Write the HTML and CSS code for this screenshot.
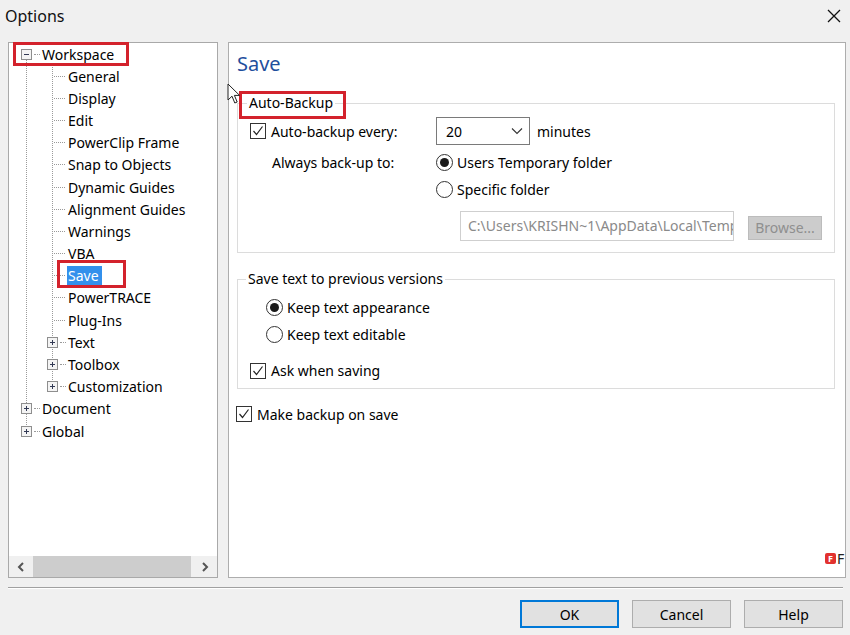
FILE: index.html
```html
<!DOCTYPE html>
<html>
<head>
<meta charset="utf-8">
<link rel="stylesheet" href="styles.css">
</head>
<body>
<div class="window">
  <div class="titlebar">
    <span class="title">Options</span>
    <svg class="close" width="14" height="14" viewBox="0 0 14 14"><path d="M1 1 L13 13 M13 1 L1 13" stroke="#111" stroke-width="1.3" fill="none"/></svg>
  </div>
  <div class="main">
    <div class="tree-panel">
      <div class="tree">
        <div class="row top"><svg class="exp" width="11" height="11" viewBox="0 0 11 11"><rect x="0.5" y="0.5" width="10" height="10" fill="#f4f4f4" stroke="#8e8e8e"/><path d="M3 5.5 H8" stroke="#333a55" stroke-width="1"/></svg><span class="hdots"></span><span class="label">Workspace</span></div>
        <div class="row child"><span class="cdots"></span><span class="label">General</span></div>
        <div class="row child"><span class="cdots"></span><span class="label">Display</span></div>
        <div class="row child"><span class="cdots"></span><span class="label">Edit</span></div>
        <div class="row child"><span class="cdots"></span><span class="label">PowerClip Frame</span></div>
        <div class="row child"><span class="cdots"></span><span class="label">Snap to Objects</span></div>
        <div class="row child"><span class="cdots"></span><span class="label">Dynamic Guides</span></div>
        <div class="row child"><span class="cdots"></span><span class="label">Alignment Guides</span></div>
        <div class="row child"><span class="cdots"></span><span class="label">Warnings</span></div>
        <div class="row child"><span class="cdots"></span><span class="label">VBA</span></div>
        <div class="row child"><span class="cdots"></span><span class="label sel">Save</span></div>
        <div class="row child"><span class="cdots"></span><span class="label">PowerTRACE</span></div>
        <div class="row child"><span class="cdots"></span><span class="label">Plug-Ins</span></div>
        <div class="row childexp"><svg class="exp" width="11" height="11" viewBox="0 0 11 11"><rect x="0.5" y="0.5" width="10" height="10" fill="#f4f4f4" stroke="#8e8e8e"/><path d="M3 5.5 H8 M5.5 3 V8" stroke="#333a55" stroke-width="1"/></svg><span class="hdots"></span><span class="label">Text</span></div>
        <div class="row childexp"><svg class="exp" width="11" height="11" viewBox="0 0 11 11"><rect x="0.5" y="0.5" width="10" height="10" fill="#f4f4f4" stroke="#8e8e8e"/><path d="M3 5.5 H8 M5.5 3 V8" stroke="#333a55" stroke-width="1"/></svg><span class="hdots"></span><span class="label">Toolbox</span></div>
        <div class="row childexp"><svg class="exp" width="11" height="11" viewBox="0 0 11 11"><rect x="0.5" y="0.5" width="10" height="10" fill="#f4f4f4" stroke="#8e8e8e"/><path d="M3 5.5 H8 M5.5 3 V8" stroke="#333a55" stroke-width="1"/></svg><span class="hdots"></span><span class="label">Customization</span></div>
        <div class="row top"><svg class="exp" width="11" height="11" viewBox="0 0 11 11"><rect x="0.5" y="0.5" width="10" height="10" fill="#f4f4f4" stroke="#8e8e8e"/><path d="M3 5.5 H8 M5.5 3 V8" stroke="#333a55" stroke-width="1"/></svg><span class="hdots"></span><span class="label">Document</span></div>
        <div class="row top"><svg class="exp" width="11" height="11" viewBox="0 0 11 11"><rect x="0.5" y="0.5" width="10" height="10" fill="#f4f4f4" stroke="#8e8e8e"/><path d="M3 5.5 H8 M5.5 3 V8" stroke="#333a55" stroke-width="1"/></svg><span class="hdots"></span><span class="label">Global</span></div>
      </div>
      <div class="hscroll">
        <div class="sbtn"><svg width="8" height="10" viewBox="0 0 8 10"><path d="M6 1 L2 5 L6 9" stroke="#555" stroke-width="2" fill="none"/></svg></div>
        <div class="thumb"></div>
        <div class="sfill"></div>
        <div class="sbtn"><svg width="8" height="10" viewBox="0 0 8 10"><path d="M2 1 L6 5 L2 9" stroke="#555" stroke-width="2" fill="none"/></svg></div>
      </div>
    </div>
    <div class="content-panel">
      <h1 class="page-title">Save</h1>
      <div class="group g1">
        <div class="group-title">Auto-Backup</div>
        <div class="grow r1">
          <label class="col1 opt"><span class="cb"><svg width="14" height="14" viewBox="0 0 14 14"><path d="M2.5 7 L5.5 10.5 L11.5 2.5" stroke="#222" stroke-width="1.2" fill="none"/></svg></span>Auto-backup every:</label>
          <div class="select"><span>20</span><svg width="12" height="8" viewBox="0 0 12 8"><path d="M1 1.5 L6 6.5 L11 1.5" stroke="#333" stroke-width="1.1" fill="none"/></svg></div>
          <span class="unit">minutes</span>
        </div>
        <div class="grow r2">
          <span class="col1 indent">Always back-up to:</span>
          <label class="opt"><span class="rb on"></span>Users Temporary folder</label>
        </div>
        <div class="grow r3">
          <span class="col1"></span>
          <label class="opt"><span class="rb"></span>Specific folder</label>
        </div>
        <div class="grow r4">
          <span class="col1"></span>
          <div class="path">C:\Users\KRISHN~1\AppData\Local\Temp</div>
          <div class="browse">Browse...</div>
        </div>
      </div>
      <div class="group g2">
        <div class="group-title">Save text to previous versions</div>
        <div class="grow s1"><label class="opt"><span class="rb on"></span>Keep text appearance</label></div>
        <div class="grow s2"><label class="opt"><span class="rb"></span>Keep text editable</label></div>
        <div class="grow s3"><label class="opt"><span class="cb"><svg width="14" height="14" viewBox="0 0 14 14"><path d="M2.5 7 L5.5 10.5 L11.5 2.5" stroke="#222" stroke-width="1.2" fill="none"/></svg></span>Ask when saving</label></div>
      </div>
      <div class="grow m1"><label class="opt"><span class="cb"><svg width="14" height="14" viewBox="0 0 14 14"><path d="M2.5 7 L5.5 10.5 L11.5 2.5" stroke="#222" stroke-width="1.2" fill="none"/></svg></span>Make backup on save</label></div>
      <div class="watermark"><span class="wm-box">F</span><span class="wm-text">F</span></div>
    </div>
  </div>
  <div class="sep"></div>
  <div class="buttons">
    <button class="btn default">OK</button>
    <button class="btn">Cancel</button>
    <button class="btn">Help</button>
  </div>
  <div class="mark mark-workspace"></div>
  <div class="mark mark-save"></div>
  <div class="mark mark-auto"></div>
  <svg class="cursor" width="14" height="22" viewBox="0 0 14 22"><path d="M1 1 L1 17 L5 13.2 L7.8 20 L10.2 19 L7.4 12.4 L12.6 12.4 Z" fill="#fff" stroke="#222" stroke-width="1"/></svg>
</div>
</body>
</html>
```
FILE: styles.css
```css
* { box-sizing: border-box; }
html, body { margin: 0; padding: 0; }
body {
  font-family: "Noto Sans", "Liberation Sans", sans-serif;
  font-size: 14px;
  color: #000;
  background: #f0f0f0;
}
.window {
  position: relative;
  width: 850px;
  height: 635px;
  background: #f0f0f0;
  display: flex;
  flex-direction: column;
  overflow: hidden;
}
.titlebar {
  height: 32px;
  display: flex;
  align-items: center;
  justify-content: space-between;
  padding: 0 9px 0 5px;
}
.title { font-size: 16px; color: #111; }
.close { display: block; }

.main {
  display: flex;
  gap: 10px;
  margin: 10px 4px 0 8px;
  height: 536px;
}
.tree-panel {
  width: 210px;
  border: 1px solid #a9a9a9;
  background: #fff;
  display: flex;
  flex-direction: column;
}
.tree {
  flex: 1;
  background-image:
    repeating-linear-gradient(to bottom, #9a9a9a 0 1px, transparent 1px 2px),
    repeating-linear-gradient(to bottom, #9a9a9a 0 1px, transparent 1px 2px);
  background-size: 1px 377px, 1px 321px;
  background-position: 17px 11px, 43px 22px;
  background-repeat: no-repeat;
}
.row {
  height: 22.18px;
  display: flex;
  align-items: center;
  white-space: nowrap;
}
.row.top { padding-left: 12px; }
.row.child { padding-left: 45px; }
.row.childexp { padding-left: 38px; }
.exp { display: block; flex: none; }
.hdots {
  width: 6px;
  height: 1px;
  margin: 0 2px;
  border-top: 1px dotted #9a9a9a;
}
.cdots {
  width: 11px;
  height: 1px;
  margin-right: 3px;
  border-top: 1px dotted #9a9a9a;
}
.label { line-height: 19px; }
.label.sel {
  background: #3390ec;
  color: #fff;
  padding: 0 3px 0 1px;
  margin-left: -1px;
}
.hscroll {
  height: 21px;
  display: flex;
  background: #f0f0f0;
}
.sbtn {
  width: 24px;
  display: flex;
  align-items: center;
  justify-content: center;
}
.thumb { width: 158px; background: #cdcdcd; }
.sfill { flex: 1; }

.content-panel {
  position: relative;
  width: 618px;
  border: 1px solid #adadad;
  background: #fff;
  padding: 8px 10px 0 8px;
  overflow: hidden;
}
.page-title {
  margin: 0;
  font-weight: normal;
  font-size: 20px;
  line-height: 26px;
  color: #1f4f9d;
}
.group {
  border: 1px solid #dcdcdc;
  padding: 0 0 0 12px;
}
.g1 { margin-top: 26px; padding-bottom: 11px; }
.g2 { margin-top: 26px; padding-bottom: 4px; }
.group-title {
  width: fit-content;
  background: #fff;
  line-height: 20px;
  margin: -11px 0 0 -3px;
  padding: 0 2px;
}
.g2 .group-title { margin-left: -4px; }
.grow { display: flex; align-items: center; white-space: nowrap; }
.col1 { width: 186px; flex: none; }
.indent { padding-left: 22px; }
.opt { display: flex; align-items: center; }
.cb {
  width: 16px;
  height: 16px;
  border: 1px solid #333;
  background: #fff;
  margin-right: 5px;
  display: flex;
  align-items: center;
  justify-content: center;
  flex: none;
}
.cb svg { display: block; }
.rb {
  width: 17px;
  height: 17px;
  border: 1px solid #333;
  border-radius: 50%;
  background: #fff;
  margin-right: 4px;
  display: flex;
  align-items: center;
  justify-content: center;
  flex: none;
}
.rb.on::after {
  content: "";
  width: 9px;
  height: 9px;
  border-radius: 50%;
  background: #1a1a1a;
}
.r1 { height: 28px; margin-top: 4px; }
.r2 { height: 27px; margin-top: 4px; }
.r3 { height: 27px; }
.r4 { height: 30px; margin-top: 8px; align-items: flex-start; }
.select {
  width: 94px;
  height: 28px;
  border: 1px solid #7a7a7a;
  display: flex;
  align-items: center;
  justify-content: space-between;
  padding: 0 6px 0 9px;
}
.select svg { display: block; }
.unit { margin-left: 7px; }
.r4 .col1 { width: 210px; }
.path {
  width: 274px;
  height: 30px;
  border: 1px solid #cfcfcf;
  color: #8a8a8a;
  padding: 0 0 0 7px;
  line-height: 28px;
  overflow: hidden;
  white-space: nowrap;
}
.browse {
  width: 74px;
  height: 24px;
  margin: 5px 0 0 14px;
  background: #cccccc;
  border: 1px solid #bcbcbc;
  color: #8f8f8f;
  line-height: 22px;
  text-align: center;
}
.s1 { height: 27px; margin-top: 5px; padding-left: 16px; }
.s2 { height: 27px; padding-left: 16px; }
.s3 { height: 27px; margin-top: 9px; }
.m1 { height: 26px; margin-top: 12px; margin-left: -1px; }

.watermark {
  position: absolute;
  left: 596px;
  top: 506px;
  height: 19px;
  display: flex;
  align-items: center;
}
.wm-box {
  width: 11px;
  height: 11px;
  background: #e2322f;
  color: #fff;
  border-radius: 2px;
  font-size: 9px;
  font-weight: bold;
  line-height: 11px;
  text-align: center;
}
.wm-text { margin-left: 1px; color: #222; font-size: 14px; line-height: 19px; }

.sep {
  margin: 9px 7px 0 8px;
  border-top: 1px solid #a0a0a0;
  border-bottom: 1px solid #fff;
}
.buttons {
  display: flex;
  justify-content: flex-end;
  gap: 13px;
  margin: 11px 7px 0 0;
}
.btn {
  width: 99px;
  height: 28px;
  background: #e1e1e1;
  border: 1px solid #adadad;
  font-family: inherit;
  font-size: 14px;
  color: #000;
  padding: 0;
}
.btn.default { border: 2px solid #0078d7; }

.mark {
  position: absolute;
  border: 3px solid #d3222c;
}
.mark-workspace { left: 13px; top: 42px; width: 116px; height: 24px; }
.mark-save { left: 57px; top: 260px; width: 69px; height: 28px; }
.mark-auto { left: 239px; top: 91px; width: 107px; height: 28px; }
.cursor { position: absolute; left: 227px; top: 83px; }
```
